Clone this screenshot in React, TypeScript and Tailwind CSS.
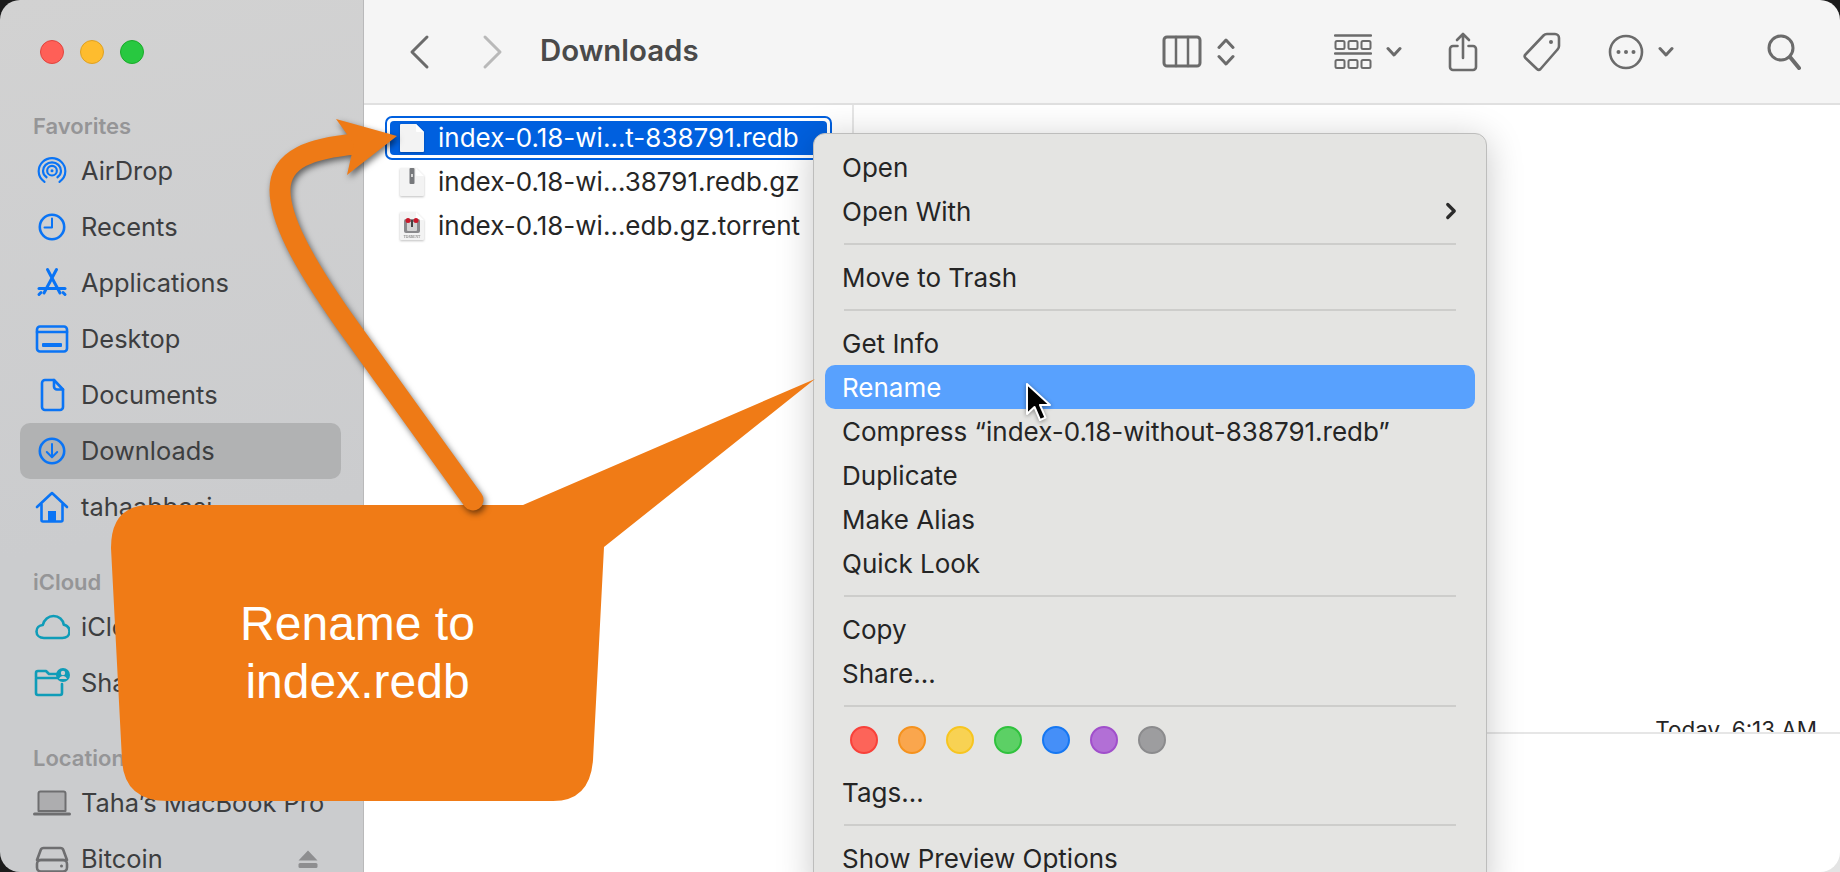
import { ChevronRight } from "lucide-react";
import type { ReactNode } from "react";

const blue = "#0a74f5";
const teal = "#0f9cb8";

function Ic({ w = 36, h = 36, vb = "0 0 36 36", c = blue, sw = 2.6, children }: { w?: number; h?: number; vb?: string; c?: string; sw?: number; children: ReactNode }) {
  return (
    <svg width={w} height={h} viewBox={vb} fill="none" stroke={c} strokeWidth={sw} strokeLinecap="round" strokeLinejoin="round">
      {children}
    </svg>
  );
}

const AirDropIcon = () => (
  <Ic w={30} h={30}>
    <path d="M9 31C4.5 27.8 2 23.4 2 18.4 2 9.6 9.2 2.6 18 2.6s16 7 16 15.8c0 5-2.5 9.4-7 12.6" />
    <path d="M11.5 25.5C8.8 23.6 7.2 21 7.2 18 7.2 12.2 12 7.6 18 7.6S28.8 12.2 28.8 18c0 3-1.6 5.6-4.3 7.5" />
    <circle cx="18" cy="17.6" r="5.8" />
    <circle cx="18" cy="17.6" r="1.8" fill={blue} stroke="none" />
  </Ic>
);
const RecentsIcon = () => (
  <Ic>
    <circle cx="18" cy="18" r="12.2" />
    <path d="M18 9.5V18.5H10.5" strokeWidth="2" />
  </Ic>
);
const AppsIcon = () => (
  <Ic>
    <path d="M13.5 4.5 26 28M22.5 4.5 10 28" strokeWidth="3" />
    <path d="M5 23.5h26" strokeWidth="3" />
    <path d="M5 29.5l2-2M31 29.5l-2-2" strokeWidth="3" />
  </Ic>
);
const DesktopIcon = () => (
  <Ic>
    <rect x="3" y="5.5" width="30" height="25" rx="3" />
    <path d="M3 11h30" />
    <rect x="8" y="22" width="20" height="4" rx="1" fill={blue} stroke="none" />
  </Ic>
);
const DocIcon = () => (
  <Ic>
    <path d="M8 6a3 3 0 0 1 3-3h9l9 9.5V30a3 3 0 0 1-3 3H11a3 3 0 0 1-3-3Z" />
    <path d="M20 3v6.5a3 3 0 0 0 3 3h6" />
  </Ic>
);
const DownIcon = () => (
  <Ic>
    <circle cx="18" cy="18" r="12.2" />
    <path d="M18 11v13M12.8 19 18 24.2 23.2 19" strokeWidth="2" />
  </Ic>
);
const HomeIcon = () => (
  <Ic>
    <path d="M3 18 18 4l15 14" strokeWidth="2.6" />
    <path d="M7.5 15.5V31a1.5 1.5 0 0 0 1.5 1.5h18a1.5 1.5 0 0 0 1.5-1.5V15.5" />
    <rect x="14" y="22" width="8" height="10.5" fill={blue} stroke="none" />
  </Ic>
);
const CloudIcon = () => (
  <Ic c={teal}>
    <path d="M10 29C5.5 29 2.5 26.2 2.5 22.5c0-3.6 2.8-6.3 6.3-6.5C10 10.500 14.500 7 19.500 7c5.600 0 9.500 3.800 10.300 8.700 3.600.8 5.700 3.400 5.700 6.800 0 3.800-3 6.500-7.200 6.500Z" />
  </Ic>
);
const SharedIcon = () => (
  <Ic c={teal}>
    <path d="M2 12V8a2 2 0 0 1 2-2h8l3 3h9" />
    <path d="M2 13h21M2 13v15a2 2 0 0 0 2 2h22a2 2 0 0 0 2-2V19" />
    <circle cx="29" cy="10" r="7" fill={teal} stroke="none" />
    <circle cx="29" cy="8" r="2.2" fill="#cdcdcf" stroke="none" />
    <path d="M25 14c.8-2 2.200-3 4-3s3.200 1 4 3Z" fill="#cdcdcf" stroke="none" />
  </Ic>
);
const LaptopIcon = () => (
  <Ic w={38} h={36} vb="0 0 38 36" c="#6e6e70">
    <path d="M5.500 26V8.500A2 2 0 0 1 7.500 6.500h23a2 2 0 0 1 2 2V26Z" fill="#adadaf" strokeWidth="2" />
    <path d="M1.500 29h35" strokeWidth="3" />
  </Ic>
);
const DriveIcon = () => (
  <Ic c="#6e6e70">
    <path d="M9.500 7h17a3 3 0 0 1 2.800 2L33 19H3l3.700-10a3 3 0 0 1 2.800-2Z" strokeLinejoin="round" />
    <rect x="3" y="19" width="30" height="11.500" rx="4" />
    <circle cx="27.500" cy="25" r="1.500" fill="#6e6e70" stroke="none" />
  </Ic>
);
const EjectIcon = () => (
  <svg width="20" height="20" viewBox="0 0 20 20" fill="#8e8e90">
    <path d="M10 1.500 19.500 11.500H.5Z" />
    <rect x=".5" y="14" width="19" height="5" rx="1.500" />
  </svg>
);

function SideRow({ icon, label, active, extra }: { icon: ReactNode; label: string; active?: boolean; extra?: ReactNode }) {
  return (
    <div className={`ml-5 mr-[22px] h-14 shrink-0 flex items-center gap-[7px] pl-[10px] pr-[23px] rounded-[10px] ${active ? "bg-[#b1b2b3]" : ""}`}>
      <span className="w-11 flex justify-center shrink-0">{icon}</span>
      <span className="text-[#3d3e40] text-[25.4px] whitespace-nowrap">{label}</span>
      {extra && <span className="ml-auto flex">{extra}</span>}
    </div>
  );
}

function SideHead({ label, first }: { label: string; first?: boolean }) {
  return (
    <div className={`h-[34px] shrink-0 flex items-center pl-[33px] text-[22px] font-semibold text-[#959597] ${first ? "" : "mt-[30px]"}`}>
      {label}
    </div>
  );
}

function Sidebar() {
  return (
    <div className="w-[364px] shrink-0 flex flex-col bg-[linear-gradient(170deg,#d2d2d2,#cbccce_60%)] border-r border-[#b9b9ba]">
      <div className="h-[109px] shrink-0 flex gap-4 pl-10 pt-10">
        <span className="w-6 h-6 rounded-full bg-[#ff5f57] border border-[#e0443e]" />
        <span className="w-6 h-6 rounded-full bg-[#febc2e] border border-[#dea123]" />
        <span className="w-6 h-6 rounded-full bg-[#28c840] border border-[#1aab29]" />
      </div>
      <SideHead label="Favorites" first />
      <SideRow icon={<AirDropIcon />} label="AirDrop" />
      <SideRow icon={<RecentsIcon />} label="Recents" />
      <SideRow icon={<AppsIcon />} label="Applications" />
      <SideRow icon={<DesktopIcon />} label="Desktop" />
      <SideRow icon={<DocIcon />} label="Documents" />
      <SideRow icon={<DownIcon />} label="Downloads" active />
      <SideRow icon={<HomeIcon />} label="tahaabbasi" />
      <SideHead label="iCloud" />
      <SideRow icon={<CloudIcon />} label="iCloud Drive" />
      <SideRow icon={<SharedIcon />} label="Shared" />
      <SideHead label="Locations" />
      <SideRow icon={<LaptopIcon />} label="Taha’s MacBook Pro" />
      <SideRow icon={<DriveIcon />} label="Bitcoin" extra={<EjectIcon />} />
    </div>
  );
}

const gray = "#6b6b6b";
const Chev = () => (
  <Ic w={16} h={12} vb="0 0 16 12" c={gray} sw={3}>
    <path d="M2 2.500 8 9l6-6.500" />
  </Ic>
);

function Toolbar() {
  return (
    <div className="h-[105px] shrink-0 flex items-center bg-[#f5f5f5] border-b-2 border-[#e0e0e0] pl-[41px]">
      <Ic w={30} h={36} vb="0 0 30 36" c={gray} sw={3}>
        <path d="M22 3 7 18l15 15" />
      </Ic>
      <span className="ml-[42px]">
        <Ic w={30} h={36} vb="0 0 30 36" c="#b9b9b9" sw={3}>
          <path d="M8 3l15 15L8 33" />
        </Ic>
      </span>
      <span className="ml-[33px] pb-[1px] text-[29.4px] font-semibold text-[#4a4a4a] whitespace-nowrap">Downloads</span>
      <span className="ml-[463px] flex items-center">
        <Ic w={40} h={33} vb="0 0 40 33" c={gray} sw={3}>
          <rect x="2" y="2" width="36" height="29" rx="3" />
          <path d="M14 2v29M26 2v29" strokeWidth="2.500" />
        </Ic>
        <span className="ml-[15px]">
          <Ic w={18} h={30} vb="0 0 18 30" c={gray} sw={3}>
            <path d="M2 10.500 9 3l7 7.500M2 19.500 9 27l7-7.500" />
          </Ic>
        </span>
      </span>
      <span className="ml-[99px] flex items-center">
        <Ic w={38} h={36} vb="0 0 38 36" c={gray} sw={2.500}>
          <path d="M1 1.500h36M1 19.500h36" />
          <rect x="1.500" y="7" width="9" height="8" rx="1.500" strokeWidth="2" />
          <rect x="14.500" y="7" width="9" height="8" rx="1.500" strokeWidth="2" />
          <rect x="27.500" y="7" width="9" height="8" rx="1.500" strokeWidth="2" />
          <rect x="1.500" y="26" width="9" height="8" rx="1.500" strokeWidth="2" />
          <rect x="14.500" y="26" width="9" height="8" rx="1.500" strokeWidth="2" />
          <rect x="27.500" y="26" width="9" height="8" rx="1.500" strokeWidth="2" />
        </Ic>
        <span className="ml-[14px]"><Chev /></span>
      </span>
      <span className="ml-[46px]">
        <Ic w={30} h={40} vb="0 0 30 40" c={gray} sw={2.600}>
          <path d="M9.500 14H5a3 3 0 0 0-3 3v18a3 3 0 0 0 3 3h20a3 3 0 0 0 3-3V17a3 3 0 0 0-3-3h-4.500" />
          <path d="M15 26V2M9 8l6-6 6 6" />
        </Ic>
      </span>
      <span className="ml-[45px]">
        <Ic w={38} h={40} vb="0 0 38 40" c={gray} sw={2.600}>
          <path d="M24 2h8a4 4 0 0 1 4 4v8a5 5 0 0 1-1.500 3.500L17.500 37a2.500 2.500 0 0 1-3.500 0L2.500 26a2.500 2.500 0 0 1 0-3.500L20.500 3.500A5 5 0 0 1 24 2Z" />
          <circle cx="28" cy="10" r="2" fill={gray} stroke="none" />
        </Ic>
      </span>
      <span className="ml-[47px] flex items-center">
        <Ic w={36} h={36} vb="0 0 36 36" c={gray} sw={2.600}>
          <circle cx="18" cy="18" r="16" />
          <circle cx="10.500" cy="18" r="2" fill={gray} stroke="none" />
          <circle cx="18" cy="18" r="2" fill={gray} stroke="none" />
          <circle cx="25.500" cy="18" r="2" fill={gray} stroke="none" />
        </Ic>
        <span className="ml-[14px]"><Chev /></span>
      </span>
      <span className="ml-[93px]">
        <Ic w={34} h={36} vb="0 0 34 36" c={gray} sw={3}>
          <circle cx="14" cy="14" r="12" />
          <path d="M23 23l9 11" strokeWidth="4" />
        </Ic>
      </span>
    </div>
  );
}

const BlankFile = ({ children }: { children?: ReactNode }) => (
  <svg width="26" height="30" viewBox="0 0 26 30" className="shrink-0 drop-shadow-[0_1px_1px_rgba(0,0,0,0.25)]">
    <path d="M2 1h15l8 8v19a1 1 0 0 1-1 1H2a1 1 0 0 1-1-1V2a1 1 0 0 1 1-1Z" fill="#f3f3f3" />
    <path d="M17 1v7a1 1 0 0 0 1 1h7Z" fill="#fff" />
    {children}
  </svg>
);

function FileRow({ name, icon }: { name: string; icon: ReactNode }) {
  return (
    <div className="h-11 ml-[14px] pl-[14px] flex items-center gap-[13px]">
      {icon}
      <span className="pb-[2px] text-[26px] text-[#262626] whitespace-nowrap">{name}</span>
    </div>
  );
}

function Content() {
  return (
    <div className="flex-1 flex bg-white min-h-0">
      <div className="w-[490px] shrink-0 border-r-2 border-[#e6e6e6] pt-[11px] pl-[7px]">
        <div className="w-[447px] ml-[14px] h-11 rounded-[7px] border-2 border-[#0060df] p-[3px]">
          <div className="h-full rounded-[4px] bg-[#0060df] flex items-center pl-[9px] gap-[13px]">
            <BlankFile />
            <span className="pb-[2px] text-[26px] text-white whitespace-nowrap">index-0.18-wi...t-838791.redb</span>
          </div>
        </div>
        <FileRow
          name="index-0.18-wi...38791.redb.gz"
          icon={
            <BlankFile>
              <rect x="10.500" y="1" width="5" height="16" rx="1" fill="#77797c" />
              <path d="M12 7h2v3h-2Z" fill="#d6d6d6" />
            </BlankFile>
          }
        />
        <FileRow
          name="index-0.18-wi...edb.gz.torrent"
          icon={
            <BlankFile>
              <rect x="5" y="8" width="16" height="14" rx="2" fill="#8a8a8d" />
              <rect x="8" y="11" width="10" height="9" rx="1" fill="#d4d4d4" />
              <circle cx="9" cy="9.500" r="2.500" fill="#c8182a" />
              <circle cx="17" cy="9.500" r="2.500" fill="#c8182a" />
              <path d="M13 9v7" stroke="#444" strokeWidth="2" />
              <text x="13" y="27" fontSize="3.600" textAnchor="middle" fill="#666" fontFamily="Liberation Serif, serif">TORRENT</text>
            </BlankFile>
          }
        />
      </div>
      <div className="flex-1 flex flex-col">
        <div className="h-[629px] shrink-0 border-b-2 border-[#e6e6e6] overflow-hidden flex flex-col justify-end items-end pr-[23px]">
          <span className="text-[22.4px] leading-[29px] h-[17px] text-[#262626] whitespace-nowrap">Today, 6:13 AM</span>
        </div>
      </div>
    </div>
  );
}

const Item = ({ label, active, right }: { label: string; active?: boolean; right?: ReactNode }) => (
  <div className={`h-11 mx-[11px] pl-[17px] pr-[11px] flex items-center justify-between rounded-[10px] text-[26px] whitespace-nowrap ${active ? "bg-[#58a1fe] text-white" : "text-[#252525]"}`}>
    <span>{label}</span>
    {right}
  </div>
);

const Sep = () => (
  <div className="h-[22px] flex items-center px-[30px]">
    <div className="h-[2px] w-full bg-[#cdcdcb]" />
  </div>
);

const tagColors = [
  "bg-[#fd6459] border-[#f8413a]",
  "bg-[#faa64d] border-[#f5921d]",
  "bg-[#f8d253] border-[#f7c520]",
  "bg-[#5cd065] border-[#2fc23d]",
  "bg-[#458ff8] border-[#1577f2]",
  "bg-[#b26fd6] border-[#a04fcb]",
  "bg-[#9d9d9f] border-[#8b8b8d]",
];

function ContextMenu() {
  return (
    <div className="absolute left-[813px] top-[133px] w-[674px] h-[760px] pt-[11px] rounded-xl bg-[#e4e4e2] border border-[#bdbdbc] shadow-[0_6px_36px_rgba(0,0,0,0.22)]">
      <Item label="Open" />
      <Item label="Open With" right={<ChevronRight size={26} strokeWidth={3} className="text-[#2b2b2b]" />} />
      <Sep />
      <Item label="Move to Trash" />
      <Sep />
      <Item label="Get Info" />
      <Item label="Rename" active />
      <Item label="Compress “index-0.18-without-838791.redb”" />
      <Item label="Duplicate" />
      <Item label="Make Alias" />
      <Item label="Quick Look" />
      <Sep />
      <Item label="Copy" />
      <Item label="Share..." />
      <Sep />
      <div className="h-[46px] flex items-center gap-5 pl-[36px]">
        {tagColors.map((cls) => (
          <span key={cls} className={`w-7 h-7 rounded-full border-2 ${cls}`} />
        ))}
      </div>
      <div className="h-[7px]" />
      <Item label="Tags..." />
      <Sep />
      <Item label="Show Preview Options" />
    </div>
  );
}

function Annotation() {
  return (
    <>
      <svg className="absolute left-0 top-0 pointer-events-none" width="1840" height="872" viewBox="0 0 1840 872">
        <path
          d="M160 505H523L815 379 604 547 593 760Q590 801 553 801H168Q124 801 122 760L111 548Q111 505 150 505Z"
          fill="#f07b16"
        />
        <g className="drop-shadow-[2px_3px_3px_rgba(0,0,0,0.55)]">
          <path
            d="M473 500 345 322C300 258 280 218 280 190 280 158 312 148 356 144"
            fill="none"
            stroke="#ee7a16"
            strokeWidth="21"
            strokeLinecap="round"
          />
          <path d="M336 119 397 136 347 175 354 144Z" fill="#ee7a16" />
        </g>
      </svg>
      <div className="absolute left-[200px] top-[595px] w-[315px] text-center text-white text-[48px] leading-[58px] font-['Liberation_Sans',Arial,sans-serif]">
        Rename to
        <br />
        index.redb
      </div>
      <svg className="absolute left-[1025px] top-[382px] drop-shadow-[0_1px_2px_rgba(0,0,0,0.4)]" width="28" height="40" viewBox="0 0 28 40">
        <path d="M2 2v30l7.500-7 5.500 13 5.500-2.300-5.500-12.700H25Z" fill="#000" stroke="#fff" strokeWidth="2" strokeLinejoin="round" />
      </svg>
    </>
  );
}

export default function App() {
  return (
    <div className="w-[1840px] h-[872px] overflow-hidden bg-[linear-gradient(135deg,#1c1c1c_97%,#e4e4e4_98%)] font-[Inter,sans-serif]">
      <div className="relative w-full h-full rounded-[20px] overflow-hidden flex">
        <Sidebar />
        <div className="flex-1 flex flex-col min-w-0">
          <Toolbar />
          <Content />
        </div>
        <ContextMenu />
        <Annotation />
      </div>
    </div>
  );
}
